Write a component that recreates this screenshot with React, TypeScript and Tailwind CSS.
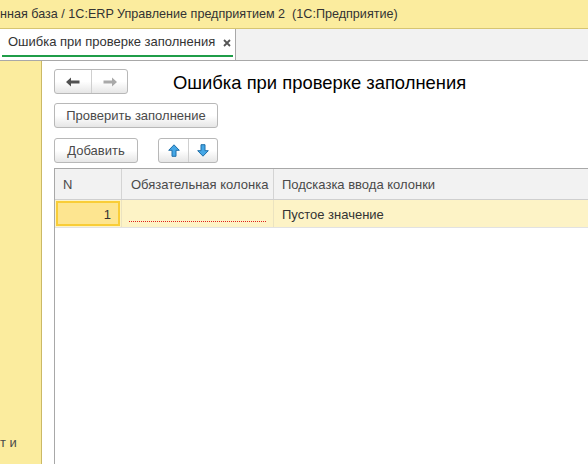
import React from 'react';

const font = { fontFamily: '"Liberation Sans", Arial, sans-serif' };

const ArrowLeft = ({ color }: { color: string }) => (
  <svg width="14" height="10" viewBox="0 0 14 10">
    <path d="M0 5 L5 0.5 L5 3.5 L13.5 3.5 L13.5 6.5 L5 6.5 L5 9.5 Z" fill={color} />
  </svg>
);

const ArrowRight = ({ color }: { color: string }) => (
  <svg width="14" height="10" viewBox="0 0 14 10">
    <path d="M14 5 L9 0.5 L9 3.5 L0.5 3.5 L0.5 6.5 L9 6.5 L9 9.5 Z" fill={color} />
  </svg>
);

const ArrowUp = () => (
  <svg width="12" height="13" viewBox="0 0 12 13">
    <path d="M6 0.8 L11.3 6.3 L8 6.3 L8 12.3 L4 12.3 L4 6.3 L0.7 6.3 Z" fill="#45a7e6" stroke="#1f6fa8" strokeWidth="1" />
  </svg>
);

const ArrowDown = () => (
  <svg width="12" height="13" viewBox="0 0 12 13">
    <path d="M6 12.2 L11.3 6.7 L8 6.7 L8 0.7 L4 0.7 L4 6.7 L0.7 6.7 Z" fill="#45a7e6" stroke="#1f6fa8" strokeWidth="1" />
  </svg>
);

const CloseIcon = () => (
  <svg width="8" height="8" viewBox="0 0 8 8">
    <path d="M1 1 L7 7 M7 1 L1 7" stroke="#555" strokeWidth="1.8" />
  </svg>
);

const btn =
  'h-[25px] border border-[#b8b8b8] rounded-[3px] bg-gradient-to-b from-white via-white to-[#e6e6e6] text-[13px] text-[#4a4a4a] flex items-center';

export default function App() {
  return (
    <div className="w-[588px] h-[464px] overflow-hidden flex flex-col bg-white" style={font}>
      {/* Title bar */}
      <div className="h-[29px] shrink-0 bg-[#fbec9e] border-b border-[#d6c572] flex items-center text-[12.6px] text-[#333] whitespace-pre">
        нная база / 1С:ERP Управление предприятием 2  (1С:Предприятие)
      </div>

      {/* Tabs */}
      <div className="h-[32px] shrink-0 bg-[#f2f2f2] border-b border-[#a8a8a8] flex">
        <div className="w-[236px] bg-white border-r border-[#a8a8a8] flex flex-col">
          <div className="flex-1 flex items-center pl-[8px] pr-[6px] text-[13px] text-[#333] whitespace-nowrap">
            <span>Ошибка при проверке заполнения</span>
            <span className="ml-[8px] mt-[1px] flex"><CloseIcon /></span>
          </div>
          <div className="h-[2px] bg-[#1f9d48] mx-[2px] mb-[3px]" />
        </div>
      </div>

      {/* Body */}
      <div className="flex-1 flex min-h-0">
        <div className="w-[42px] shrink-0 bg-[#fbec9e] border-r border-[#cbb966] flex flex-col justify-end pb-[12px]">
          <span className="text-[13px] text-[#4a4a4a] whitespace-pre">т и</span>
        </div>

        <div className="flex-1 pl-[12px] pt-[8px] flex flex-col min-w-0">
          <div className="flex items-center h-[25px]">
            <div className={`${btn} w-[74px]`}>
              <div className="w-[37px] h-full flex items-center justify-center border-r border-[#cfcfcf]">
                <ArrowLeft color="#505050" />
              </div>
              <div className="flex-1 h-full flex items-center justify-center">
                <ArrowRight color="#a9a9a9" />
              </div>
            </div>
            <div className="ml-[45px] mt-[2px] text-[18.4px] text-black whitespace-nowrap">Ошибка при проверке заполнения</div>
          </div>

          <div className="mt-[9px] flex">
            <div className={`${btn} w-[164px] justify-center`}>Проверить заполнение</div>
          </div>

          <div className="mt-[10px] flex">
            <div className={`${btn} w-[84px] justify-center`}>Добавить</div>
            <div className={`${btn} w-[60px] ml-[20px]`}>
              <div className="w-[30px] h-full flex items-center justify-center border-r border-[#cfcfcf]">
                <ArrowUp />
              </div>
              <div className="flex-1 h-full flex items-center justify-center">
                <ArrowDown />
              </div>
            </div>
          </div>

          {/* Table */}
          <div className="mt-[5px] w-[600px] flex-1 border-l border-t border-[#a8a8a8] flex flex-col text-[13px] text-[#4a4a4a]">
            <div className="h-[31px] shrink-0 flex bg-[#f2f2f2] border-b border-[#cfcfcf]">
              <div className="w-[67px] border-r border-[#d4d4d4] flex items-center pl-[8px] pt-[2px]">N</div>
              <div className="w-[152px] border-r border-[#d4d4d4] flex items-center pl-[9px] pt-[2px] whitespace-nowrap">
                Обязательная колонка
              </div>
              <div className="flex-1 flex items-center pl-[8px] pt-[2px] whitespace-nowrap">Подсказка ввода колонки</div>
            </div>
            <div className="h-[28px] shrink-0 flex bg-[#fdf3c6] border-b border-[#e2e2e2] text-[#333]">
              <div className="w-[67px] border-r border-[#ebe3c0] flex">
                <div className="flex-1 m-px border-2 border-[#f9cd37] bg-[#fde590] flex items-center justify-end pr-[7px] pt-[2px]">1</div>
              </div>
              <div className="w-[152px] border-r border-[#ebe3c0] flex items-end px-[7px] pb-[5px]">
                <div className="w-full border-b border-dotted border-[#e0201a]" />
              </div>
              <div className="flex-1 flex items-center pl-[8px] pt-[2px]">Пустое значение</div>
            </div>
          </div>
        </div>
      </div>
    </div>
  );
}
